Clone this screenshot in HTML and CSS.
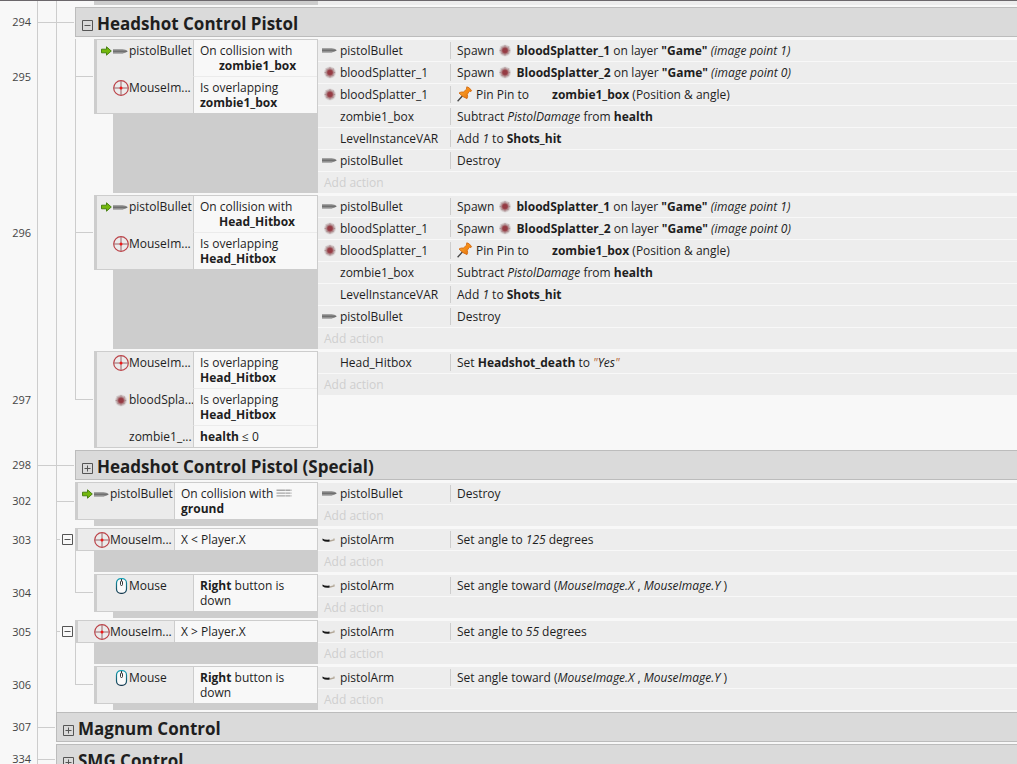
FILE: index.html
```html
<!DOCTYPE html>
<html lang="en">
<head>
<meta charset="utf-8">
<title>Event sheet</title>
<link rel="stylesheet" href="styles.css">
</head>
<body>
<svg class="sprite" aria-hidden="true">
  <defs>
    <radialGradient id="blood"><stop offset="0" stop-color="#8f2c36"/><stop offset=".4" stop-color="#a0545a"/><stop offset=".7" stop-color="#b39a9b" stop-opacity=".7"/><stop offset="1" stop-color="#c4bcbc" stop-opacity="0"/></radialGradient>
    <linearGradient id="mouse" x1="0" y1="0" x2="0" y2="1"><stop offset="0" stop-color="#13a0b4"/><stop offset="1" stop-color="#16384e"/></linearGradient>
    <linearGradient id="pin" x1="0" y1="0" x2="1" y2="1"><stop offset="0" stop-color="#ffb23c"/><stop offset="1" stop-color="#e36a00"/></linearGradient>
  </defs>
  <symbol id="i-arrow" viewBox="0 0 11 10"><path d="M.5 3.200h5V.8L10.300 5 5.500 9.200V6.800h-5z" fill="#73b80c" stroke="#3f7a08" stroke-width=".9"/></symbol>
  <symbol id="i-bullet" viewBox="0 0 16 16"><path d="M0 6.300h9.500q3 .2 5.500 2-2.500 2-5.500 2.200H0z" fill="#8a8a8a"/><path d="M0 8.300h14" stroke="#6a6a6a" stroke-width="1"/><path d="M0 10.200h10" stroke="#a8a8a8" stroke-width=".8"/></symbol>
  <symbol id="i-blood" viewBox="0 0 16 16"><circle cx="8" cy="8.500" r="6.500" fill="url(#blood)"/><path d="M8 3v11M2.500 8.500h11M4 4.500l8 8M12 4.500l-8 8" stroke="#8a6266" stroke-width="1" stroke-opacity=".4" stroke-dasharray="1.500 .8"/><circle cx="8" cy="8.500" r="2.400" fill="#98343e" fill-opacity=".6"/></symbol>
  <symbol id="i-cross" viewBox="0 0 16 16"><circle cx="8" cy="8" r="7.300" fill="none" stroke="#bb4248" stroke-width="1.200"/><path d="M8 1v14M1 8h14" stroke="#9c6266" stroke-width="1"/><circle cx="8" cy="8" r="1.500" fill="#f01818"/></symbol>
  <symbol id="i-mouse" viewBox="0 0 16 16"><rect x="3.500" y=".6" width="10" height="14.800" rx="4.300" fill="#fafafa" stroke="url(#mouse)" stroke-width="1.200"/><path d="M8.500 1v2" stroke="#333" stroke-width="1"/><rect x="7.500" y="3" width="2" height="4.500" rx="1" fill="#fff" stroke="#222" stroke-width=".9"/></symbol>
  <symbol id="i-arm" viewBox="0 0 16 16"><path d="M8 10l4-1v-1.500" fill="none" stroke="#b3a898" stroke-width="1.300"/><path d="M.5 7.400Q2.800 9.200 7.500 8.600l.3 1.900Q3.500 11.400.5 9.200z" fill="#161616"/></symbol>
  <symbol id="i-pin" viewBox="0 0 16 16"><path d="M5.800 9.500L.6 15.300" stroke="#444" stroke-width="1.300"/><path d="M9.800.8q2.400.2 4.800 3.800l-.6.9-1.600-.4-2.100 3.200q.8 2.400-.3 4.300Q6.200 11.600 2 7q1.800-1.400 4.400-1l3-2.600z" fill="url(#pin)" stroke="#cf6208" stroke-width=".8"/><path d="M10.500 2.400l2.300 2.200-3 3.200-2-2z" fill="#f78a12"/></symbol>
  <symbol id="i-ground" viewBox="0 0 16 16"><path d="M0 4.500h16M0 7.500h16M0 10.500h16" stroke="#a6a6a6" stroke-width="1.400" stroke-dasharray="9 .4 5 .4"/></symbol>
  <symbol id="i-minus" viewBox="0 0 11 11"><path d="M.5.5h10v10H.5zM2.500 5.500h6" fill="none" stroke="currentColor"/></symbol>
  <symbol id="i-plus" viewBox="0 0 11 11"><path d="M.5.5h10v10H.5zM2.500 5.500h6M5.500 2.500v6" fill="none" stroke="currentColor"/></symbol>
</svg>

<main class="sheet">
  <section class="row stub"><i class="guide g1"></i><i class="guide g2"></i><i class="filler"></i><div class="actions"></div></section>

  <section class="row d1">
    <i class="guide g1"></i><i class="guide g2"></i><span class="num">294</span><i class="link wide"></i>
    <header class="group"><button class="toggle" aria-label="Collapse Headshot Control Pistol"><svg><use href="#i-minus"/></svg></button><h2>Headshot Control Pistol</h2></header>
  </section>

  <section class="row d2">
    <i class="guide g1"></i><i class="guide g2"></i><i class="guide g3"></i><span class="num">295</span><i class="link"></i>
    <div class="conditions">
      <div class="cond"><div class="obj"><svg class="trigger"><use href="#i-arrow"/></svg><svg class="icon"><use href="#i-bullet"/></svg><span>pistolBullet</span></div><div class="test">On collision with<br><b class="indent">zombie1_box</b></div></div>
      <div class="cond"><div class="obj"><svg class="icon"><use href="#i-cross"/></svg><span>MouseIm...</span></div><div class="test">Is overlapping<br><b>zombie1_box</b></div></div>
    </div>
    <i class="filler"></i>
    <div class="actions">
      <div class="act"><div class="who"><svg class="icon"><use href="#i-bullet"/></svg><span>pistolBullet</span></div><div class="what">Spawn <svg class="icon inl"><use href="#i-blood"/></svg> <b>bloodSplatter_1</b> on layer <b>"Game"</b> <em>(image point 1)</em></div></div>
      <div class="act"><div class="who"><svg class="icon"><use href="#i-blood"/></svg><span>bloodSplatter_1</span></div><div class="what">Spawn <svg class="icon inl"><use href="#i-blood"/></svg> <b>BloodSplatter_2</b> on layer <b>"Game"</b> <em>(image point 0)</em></div></div>
      <div class="act"><div class="who"><svg class="icon"><use href="#i-blood"/></svg><span>bloodSplatter_1</span></div><div class="what"><svg class="icon pin"><use href="#i-pin"/></svg>Pin Pin to <b class="indent">zombie1_box</b> (Position &amp; angle)</div></div>
      <div class="act"><div class="who"><span>zombie1_box</span></div><div class="what">Subtract <em>PistolDamage</em> from <b>health</b></div></div>
      <div class="act"><div class="who"><span>LevelInstanceVAR</span></div><div class="what">Add <em>1</em> to <b>Shots_hit</b></div></div>
      <div class="act"><div class="who"><svg class="icon"><use href="#i-bullet"/></svg><span>pistolBullet</span></div><div class="what">Destroy</div></div>
      <button class="add">Add action</button>
    </div>
  </section>

  <section class="row d2">
    <i class="guide g1"></i><i class="guide g2"></i><i class="guide g3"></i><span class="num">296</span><i class="link"></i>
    <div class="conditions">
      <div class="cond"><div class="obj"><svg class="trigger"><use href="#i-arrow"/></svg><svg class="icon"><use href="#i-bullet"/></svg><span>pistolBullet</span></div><div class="test">On collision with<br><b class="indent">Head_Hitbox</b></div></div>
      <div class="cond"><div class="obj"><svg class="icon"><use href="#i-cross"/></svg><span>MouseIm...</span></div><div class="test">Is overlapping<br><b>Head_Hitbox</b></div></div>
    </div>
    <i class="filler"></i>
    <div class="actions">
      <div class="act"><div class="who"><svg class="icon"><use href="#i-bullet"/></svg><span>pistolBullet</span></div><div class="what">Spawn <svg class="icon inl"><use href="#i-blood"/></svg> <b>bloodSplatter_1</b> on layer <b>"Game"</b> <em>(image point 1)</em></div></div>
      <div class="act"><div class="who"><svg class="icon"><use href="#i-blood"/></svg><span>bloodSplatter_1</span></div><div class="what">Spawn <svg class="icon inl"><use href="#i-blood"/></svg> <b>BloodSplatter_2</b> on layer <b>"Game"</b> <em>(image point 0)</em></div></div>
      <div class="act"><div class="who"><svg class="icon"><use href="#i-blood"/></svg><span>bloodSplatter_1</span></div><div class="what"><svg class="icon pin"><use href="#i-pin"/></svg>Pin Pin to <b class="indent">zombie1_box</b> (Position &amp; angle)</div></div>
      <div class="act"><div class="who"><span>zombie1_box</span></div><div class="what">Subtract <em>PistolDamage</em> from <b>health</b></div></div>
      <div class="act"><div class="who"><span>LevelInstanceVAR</span></div><div class="what">Add <em>1</em> to <b>Shots_hit</b></div></div>
      <div class="act"><div class="who"><svg class="icon"><use href="#i-bullet"/></svg><span>pistolBullet</span></div><div class="what">Destroy</div></div>
      <button class="add">Add action</button>
    </div>
  </section>

  <section class="row d2">
    <i class="guide g1"></i><i class="guide g2"></i><i class="elbow"></i><span class="num">297</span>
    <div class="conditions">
      <div class="cond"><div class="obj"><svg class="icon"><use href="#i-cross"/></svg><span>MouseIm...</span></div><div class="test">Is overlapping<br><b>Head_Hitbox</b></div></div>
      <div class="cond"><div class="obj"><svg class="icon"><use href="#i-blood"/></svg><span>bloodSpla...</span></div><div class="test">Is overlapping<br><b>Head_Hitbox</b></div></div>
      <div class="cond"><div class="obj"><span>zombie1_...</span></div><div class="test"><b>health</b> ≤ 0</div></div>
    </div>
    <div class="actions">
      <div class="act"><div class="who"><span>Head_Hitbox</span></div><div class="what">Set <b>Headshot_death</b> to <em><span class="quote">"</span>Yes<span class="quote">"</span></em></div></div>
      <button class="add">Add action</button>
    </div>
  </section>

  <section class="row d1">
    <i class="guide g1"></i><i class="guide g2"></i><span class="num">298</span><i class="link wide"></i>
    <header class="group"><button class="toggle" aria-label="Expand Headshot Control Pistol (Special)"><svg><use href="#i-plus"/></svg></button><h2>Headshot Control Pistol (Special)</h2></header>
  </section>

  <section class="row d1">
    <i class="guide g1"></i><i class="guide g2"></i><span class="num">302</span><i class="link"></i>
    <div class="conditions">
      <div class="cond"><div class="obj"><svg class="trigger"><use href="#i-arrow"/></svg><svg class="icon"><use href="#i-bullet"/></svg><span>pistolBullet</span></div><div class="test">On collision with <svg class="icon ground"><use href="#i-ground"/></svg><br><b>ground</b></div></div>
    </div>
    <i class="filler"></i>
    <div class="actions">
      <div class="act"><div class="who"><svg class="icon"><use href="#i-bullet"/></svg><span>pistolBullet</span></div><div class="what">Destroy</div></div>
      <button class="add">Add action</button>
    </div>
  </section>

  <section class="row d1">
    <i class="guide g1"></i><i class="guide g2"></i><i class="guide stem"></i><span class="num">303</span><div class="fold"><button class="toggle" aria-label="Collapse event 303"><svg><use href="#i-minus"/></svg></button></div>
    <div class="conditions">
      <div class="cond"><div class="obj"><svg class="icon"><use href="#i-cross"/></svg><span>MouseIm...</span></div><div class="test">X &lt; Player.X</div></div>
    </div>
    <i class="filler"></i>
    <div class="actions">
      <div class="act"><div class="who"><svg class="icon"><use href="#i-arm"/></svg><span>pistolArm</span></div><div class="what">Set angle to <em>125</em> degrees</div></div>
      <button class="add">Add action</button>
    </div>
  </section>

  <section class="row d2">
    <i class="guide g1"></i><i class="guide g2"></i><i class="elbow"></i><span class="num">304</span>
    <div class="conditions">
      <div class="cond"><div class="obj"><svg class="icon"><use href="#i-mouse"/></svg><span>Mouse</span></div><div class="test"><b>Right</b> button is<br>down</div></div>
    </div>
    <i class="filler"></i>
    <div class="actions">
      <div class="act"><div class="who"><svg class="icon"><use href="#i-arm"/></svg><span>pistolArm</span></div><div class="what">Set angle toward (<em>MouseImage.X</em> , <em>MouseImage.Y</em> )</div></div>
      <button class="add">Add action</button>
    </div>
  </section>

  <section class="row d1">
    <i class="guide g1"></i><i class="guide g2"></i><i class="guide stem"></i><span class="num">305</span><div class="fold"><button class="toggle" aria-label="Collapse event 305"><svg><use href="#i-minus"/></svg></button></div>
    <div class="conditions">
      <div class="cond"><div class="obj"><svg class="icon"><use href="#i-cross"/></svg><span>MouseIm...</span></div><div class="test">X &gt; Player.X</div></div>
    </div>
    <i class="filler"></i>
    <div class="actions">
      <div class="act"><div class="who"><svg class="icon"><use href="#i-arm"/></svg><span>pistolArm</span></div><div class="what">Set angle to <em>55</em> degrees</div></div>
      <button class="add">Add action</button>
    </div>
  </section>

  <section class="row d2">
    <i class="guide g1"></i><i class="guide g2"></i><i class="elbow"></i><span class="num">306</span>
    <div class="conditions">
      <div class="cond"><div class="obj"><svg class="icon"><use href="#i-mouse"/></svg><span>Mouse</span></div><div class="test"><b>Right</b> button is<br>down</div></div>
    </div>
    <i class="filler"></i>
    <div class="actions">
      <div class="act"><div class="who"><svg class="icon"><use href="#i-arm"/></svg><span>pistolArm</span></div><div class="what">Set angle toward (<em>MouseImage.X</em> , <em>MouseImage.Y</em> )</div></div>
      <button class="add">Add action</button>
    </div>
  </section>

  <section class="row d0">
    <i class="guide g1"></i><span class="num">307</span><i class="link"></i>
    <header class="group"><button class="toggle" aria-label="Expand Magnum Control"><svg><use href="#i-plus"/></svg></button><h2>Magnum Control</h2></header>
  </section>

  <section class="row d0">
    <i class="guide g1"></i><span class="num">334</span><i class="link"></i>
    <header class="group"><button class="toggle" aria-label="Expand SMG Control"><svg><use href="#i-plus"/></svg></button><h2>SMG Control</h2></header>
  </section>
</main>
</body>
</html>
```
FILE: styles.css
```css
:root {
  --paper: #f8f8f8;
  --line: #cdcdcd;
  --ink: #1e1e1e;
}

* { box-sizing: border-box; }

body {
  margin: 0;
  height: 100vh;
  overflow: hidden;
  background: var(--paper);
  color: var(--ink);
  font: 12px/15px "Open Sans", "Noto Sans", sans-serif;
}

.sprite { position: absolute; width: 0; height: 0; }
svg { display: block; flex: none; }

button {
  margin: 0;
  padding: 0;
  border: 0;
  background: none;
  color: inherit;
  font: inherit;
  text-align: left;
}

.sheet { border-top: 1px solid #6b676b; }

/* gutter | three indent steps | conditions | actions */
.row {
  display: grid;
  grid-template-columns: 37px 19px 19px 19px 224px minmax(0, 1fr);
  grid-template-rows: auto 1fr 2px;
}

/* tree lines */
.guide { grid-row: 1 / 4; border-left: 1px solid var(--line); }
.g1 { grid-column: 2; }
.g2 { grid-column: 3; }
.g3 { grid-column: 4; }
.stem { grid-column: 4; grid-row: 2 / 4; }
.elbow {
  grid-column: 4;
  grid-row: 1;
  height: 50%;
  margin-right: 1px;
  border: solid var(--line);
  border-width: 0 0 1px 1px;
}
.link {
  grid-row: 1;
  align-self: center;
  height: 1px;
  margin-right: 1px;
  background: var(--line);
}
.d0 .link { grid-column: 2; }
.d1 .link { grid-column: 3; }
.d2 .link { grid-column: 4; }
.d1 .wide { grid-column: 2 / 4; }

.num {
  grid-column: 1;
  grid-row: 1;
  align-self: center;
  padding: 0 6px 1px 0;
  color: #444;
  font-size: 11px;
  text-align: right;
}

.fold {
  grid-column: 3;
  grid-row: 1;
  align-self: center;
  display: flex;
  align-items: center;
  gap: 2px;
}
.fold::before { content: ""; width: 4px; height: 1px; background: var(--line); }

.toggle { color: #555; }
.toggle svg { width: 11px; height: 11px; }

/* group headings */
.group {
  grid-row: 1;
  display: flex;
  align-items: center;
  gap: 4px;
  height: 30px;
  padding-left: 6px;
  border: solid #bcbcbc;
  border-width: 1px 0 1px 1px;
  background: #dadada;
}
.d0 .group { grid-column: 3 / 7; }
.d1 .group { grid-column: 4 / 7; }
.group .toggle { padding-top: 6px; }
.group h2 {
  margin: 0;
  padding-top: 4px;
  font: bold 17px/24px "Open Sans", "Noto Sans", sans-serif;
}

/* conditions */
.conditions {
  grid-row: 1;
  border: 1px solid var(--line);
  border-left-width: 3px;
  background: #ebebeb;
}
.d1 .conditions, .d1 .filler { grid-column: 4 / 6; }
.d2 .conditions, .d2 .filler { grid-column: 5; }
.filler { grid-row: 2; margin-left: 19px; background: var(--line); }

.cond { display: grid; grid-template-columns: 96px 1fr; }
.obj {
  display: grid;
  grid-template-columns: 12px 16px auto;
  align-content: start;
  padding: 3px 0 0 4px;
  white-space: nowrap;
}
.obj .trigger { grid-column: 1; grid-row: 1; width: 11px; height: 10px; margin-top: 3px; }
.obj .icon { grid-column: 2; grid-row: 1; }
.obj span { grid-column: 3; grid-row: 1; }
.icon { width: 16px; height: 16px; }

.test {
  padding: 3px 0 3px 6px;
  border-left: 1px solid var(--line);
  background: var(--paper);
  white-space: nowrap;
}
.cond + .cond .test { border-top: 1px solid #ebebeb; }
.cond + .cond .obj { padding-top: 4px; }
.indent { margin-left: 19px; }

/* actions */
.actions { grid-column: 6; grid-row: 1 / 3; }
.act, .add {
  height: 22px;
  border-top: 1px solid var(--paper);
  background: #ededed;
}
.act { display: grid; grid-template-columns: 132px minmax(0, 1fr); padding: 2px 0; }
.who {
  display: grid;
  grid-template-columns: 18px auto;
  padding-left: 4px;
  line-height: 17px;
}
.who span { grid-column: 2; grid-row: 1; }
.what {
  padding-left: 6px;
  border-left: 1px solid var(--line);
  line-height: 17px;
  white-space: nowrap;
}
.what .icon { display: inline-block; vertical-align: top; }
.pin { margin-right: 3px; }
.quote { color: #b8683c; }
.what .indent { margin-left: 20px; }
.ground { display: inline-block; height: 15px; vertical-align: top; }
.add { display: block; width: 100%; padding-left: 6px; color: #cfcfcf; }

/* tail of the event scrolled off the top */
.stub { grid-template-rows: 0 4px 2px; }
.stub .filler { grid-column: 5; margin-left: 0; }
.stub .actions { background: #ededed; }
```
